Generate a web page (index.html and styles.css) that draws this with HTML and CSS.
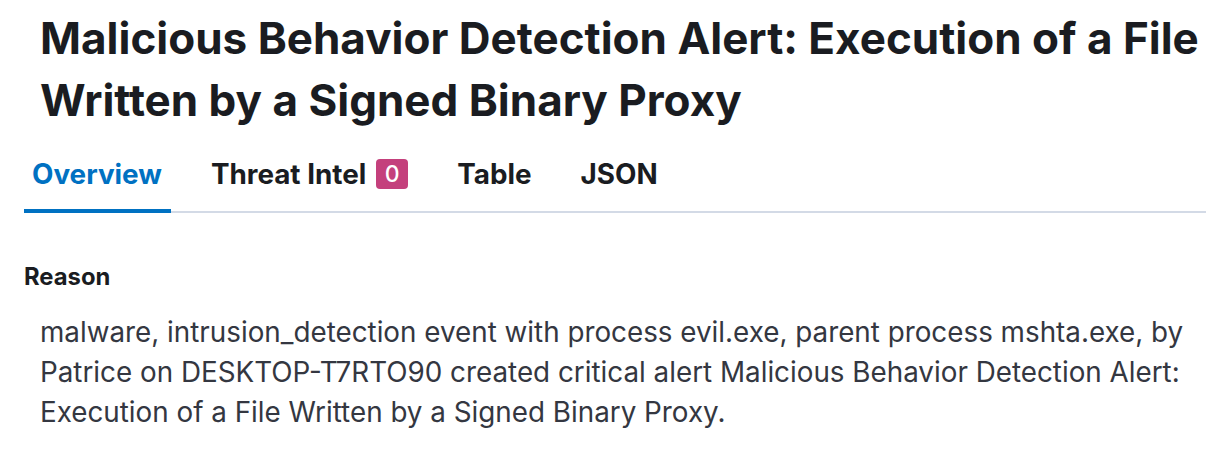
FILE: index.html
```html
<!DOCTYPE html>
<html lang="en">
<head>
  <meta charset="UTF-8">
  <title>Alert details</title>
  <link rel="stylesheet" href="styles.css">
</head>
<body>
  <div class="flyout">
    <h1 class="title">Malicious Behavior Detection Alert: Execution of a File Written by a Signed Binary Proxy</h1>
    <div class="tabs">
      <a class="tab selected" href="#">Overview</a>
      <a class="tab" href="#">Threat Intel <span class="badge">0</span></a>
      <a class="tab" href="#">Table</a>
      <a class="tab" href="#">JSON</a>
    </div>
    <section class="reason">
      <h2>Reason</h2>
      <p>malware, intrusion_detection event with process evil.exe, parent process mshta.exe, by Patrice on DESKTOP-T7RTO90 created critical alert Malicious Behavior Detection Alert: Execution of a File Written by a Signed Binary Proxy.</p>
    </section>
  </div>
</body>
</html>
```

FILE: styles.css
```css
body { margin: 0; font-family: Inter, "Noto Sans", sans-serif; color: #343741; background: #fff; }
.flyout { padding: 7px 0 0 24px; }
.title { margin: 0 0 18px 16px; font-size: 44px; line-height: 62px; font-weight: 700; color: #1a1c21; }
.tabs { display: flex; gap: 32px; box-shadow: inset 0 -2px 0 #d3dae6; }
.tab { display: flex; align-items: center; padding: 9px 9px 23px 8px; line-height: 32px; font-size: 27.8px; font-weight: 700; color: #1a1c21; text-decoration: none; }
.tab.selected { color: #0071c2; box-shadow: inset 0 -4px 0 #0071c2; }
.badge { margin-left: 10px; width: 32px; height: 30px; border-radius: 4px; background: #c4407c; color: #fff; font-size: 23px; font-weight: 500; line-height: 30px; text-align: center; }
.reason { padding-top: 50px; }
.reason h2 { margin: 0; font-size: 23.8px; line-height: 28px; font-weight: 700; color: #1a1c21; }
.reason p { margin: 21px 0 0 16px; font-size: 27.8px; line-height: 40px; }
```
